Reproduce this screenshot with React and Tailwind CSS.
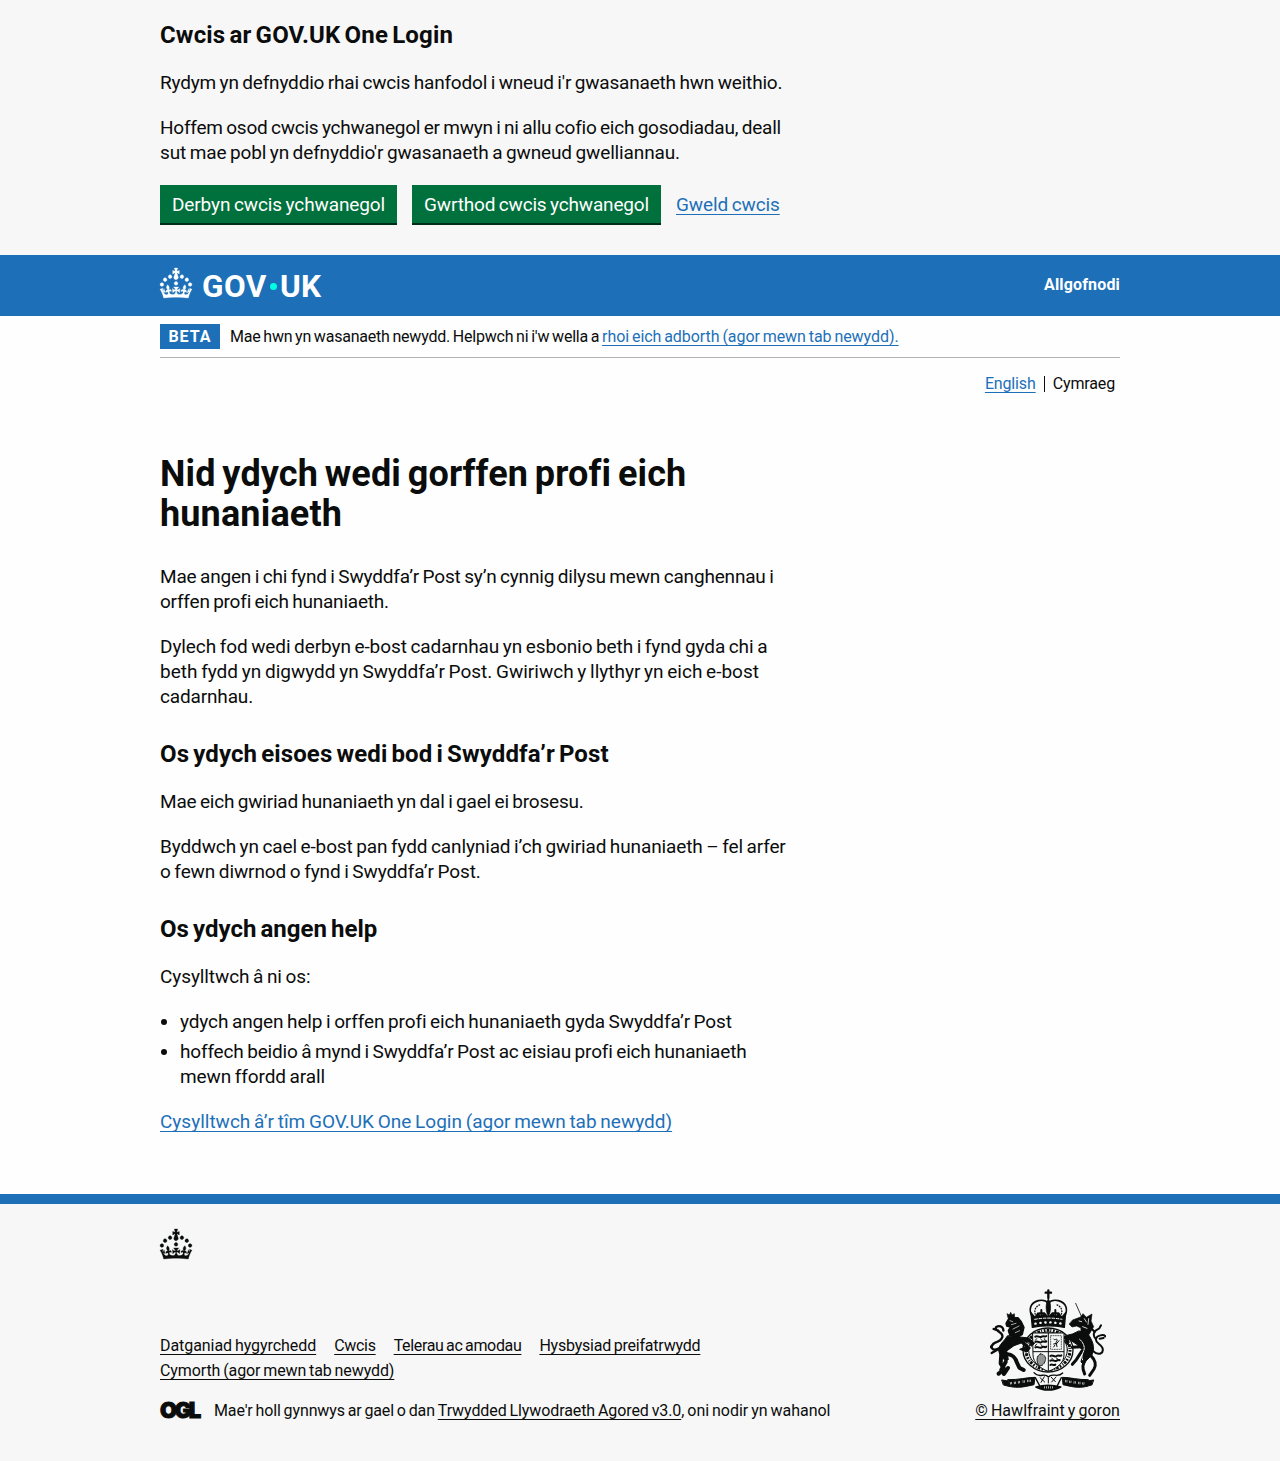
import React from "react";

const CROWN =
  "M22.6 10.4c-1 .4-2-.1-2.4-1-.4-.9.1-2 1-2.4.9-.4 2 .1 2.4 1s-.1 2-1 2.4m-5.9 6.7c-.9.4-2-.1-2.4-1-.4-.9.1-2 1-2.4.9-.4 2 .1 2.4 1s-.1 2-1 2.4m10.8-3.7c-1 .4-2-.1-2.4-1-.4-.9.1-2 1-2.4.9-.4 2 .1 2.4 1s0 2-1 2.4m3.3 4.8c-1 .4-2-.1-2.4-1-.4-.9.1-2 1-2.4.9-.4 2 .1 2.4 1s-.1 2-1 2.4M17 4.7l2.3 1.2V2.5l-2.3.7-.2-.2.9-3h-3.4l.9 3-.2.2c-.1.1-2.3-.7-2.3-.7v3.4L15 4.7c.1.1.1.2.2.2l-1.3 4c-.1.2-.1.4-.1.6 0 1.1.8 2 1.9 2.2h.7c1-.2 1.9-1.1 1.9-2.1 0-.2 0-.4-.1-.6l-1.3-4c-.1-.2 0-.2.1-.3m-7.6 5.7c.9.4 2-.1 2.4-1 .4-.9-.1-2-1-2.4-.9-.4-2 .1-2.4 1s0 2 1 2.4m-5 3c.9.4 2-.1 2.4-1 .4-.9-.1-2-1-2.4-.9-.4-2 .1-2.4 1s.1 2 1 2.4m-3.2 4.8c.9.4 2-.1 2.4-1 .4-.9-.1-2-1-2.4-.9-.4-2 .1-2.4 1s0 2 1 2.4m14.8 11c4.4 0 8.6.3 12.3.8 1.1-4.5 2.4-7 3.7-8.8l-2.5-.9c.2 1.3.3 1.9 0 2.7-.4-.4-.8-1.1-1.1-2.3l-1.2 4c.7-.5 1.3-.8 2-.9-1.1 2.5-2.6 3.1-3.5 3-1.1-.2-1.7-1.2-1.5-2.1.3-1.2 1.5-1.5 2.1-.1 1.1-2.3-.8-3-2-2.3 1.9-1.9 2.1-3.5.6-5.6-2.1 1.6-2.1 3.2-1.2 5.5-1.2-1.4-3.2-.6-2.5 1.6.9-1.4 2.1-.5 1.9.8-.2 1.1-1.7 2.1-3.5 1.9-2.7-.2-2.9-2.1-2.9-3.6.7-.1 1.9.5 2.9 1.9l.4-4.3c-1.1 1.1-2.1 1.4-3.2 1.4.4-1.2 2.1-3 2.1-3h-5.4s1.7 1.9 2.1 3c-1.1 0-2.1-.2-3.2-1.4l.4 4.3c1-1.4 2.2-2 2.9-1.9-.1 1.5-.2 3.4-2.9 3.6-1.9.2-3.4-.8-3.5-1.9-.2-1.3 1-2.2 1.9-.8.7-2.3-1.2-3-2.5-1.6.9-2.2.9-3.9-1.2-5.5-1.5 2-1.3 3.7.6 5.6-1.2-.7-3.1 0-2 2.3.6-1.4 1.8-1.1 2.1.1.2.9-.3 1.9-1.5 2.1-.9.2-2.4-.5-3.5-3 .6 0 1.2.3 2 .9l-1.2-4c-.3 1.1-.7 1.9-1.1 2.3-.3-.8-.2-1.4 0-2.7l-2.9.9C1.3 23 2.6 25.5 3.7 30c3.7-.5 7.9-.8 12.3-.8";

function Crown({ className = "" }) {
  return (
    <svg viewBox="0 0 32 30" className={`h-[30px] w-8 shrink-0 ${className}`} fill="currentColor" stroke="currentColor" strokeWidth="0.3" overflow="visible" aria-hidden="true">
      <path fillRule="evenodd" d={CROWN} />
    </svg>
  );
}

function Crest() {
  return (
    <svg viewBox="90 25 348 306" className="h-[102px] w-[116px]" fill="none" stroke="#0b0c0c" strokeLinecap="round" strokeLinejoin="round" aria-hidden="true">
      {/* royal crown */}
      <path d="M265 29v23M257 36h16" strokeWidth="7" />
      <path d="M219 112C203 88 211 66 235 60c14-3 24 0 30 8 6-8 17-11 30-8 24 6 32 28 16 52" strokeWidth="5" />
      <path d="M229 108c-10-18-2-33 13-36M301 108c10-18 2-33-13-36" strokeWidth="4" strokeDasharray="2 6" />
      <path d="M265 54c-10 16-8 38 0 54 8-16 10-38 0-54z" fill="#0b0c0c" strokeWidth="2" />
      <path d="M244 88v22M286 88v22M238 98h12M280 98h12" strokeWidth="6" />
      <path d="M213 96l12 14 9-13 9 13 10-13 12 13 12-13 10 13 9-13 9 13 12-14-4 44c-32-6-64-6-96 0z" fill="#0b0c0c" strokeWidth="4" />
      <path d="M226 129c26-5 52-5 78 0" stroke="#f7f7f7" strokeWidth="7" strokeDasharray="1 14" />
      <path d="M224 116c28-5 56-5 82 0" stroke="#f7f7f7" strokeWidth="3" strokeDasharray="8 5" />
      {/* garter and quartered shield */}
      <ellipse cx="264" cy="208" rx="75" ry="66" strokeWidth="4" />
      <ellipse cx="264" cy="208" rx="66" ry="59" strokeWidth="9" strokeLinecap="butt" strokeDasharray="5 4 8 3 3 5" />
      <ellipse cx="264" cy="208" rx="58" ry="54" strokeWidth="3" />
      <path d="M219 157h93v66c0 25-24 41-47 49-22-8-46-24-46-49z" fill="#f7f7f7" strokeWidth="3" />
      <path d="M265 158v112M220 213h91" strokeWidth="3" />
      <path d="M226 168c8-5 12 5 19 0s10 3 14-2M226 184c8-5 12 5 19 0s10 3 14-2M226 200c8-5 12 5 19 0s10 3 14-2M271 226c8-5 12 5 19 0s10 3 14-2M271 240c8-5 12 5 19 0s6 1 9-2M271 253c6-4 9 3 15-1" strokeWidth="6" />
      <path d="M230 174l-4 5m16-4l5 5m6-6l3 6M230 190l-4 5m16-4l5 5M275 232l4 4m10-4l5 4" strokeWidth="3" />
      <path d="M272 165h32v41h-32z" strokeWidth="2" strokeDasharray="3 4" />
      <path d="M281 175c4 7 7-4 11 3-2 5-6 6-2 11l7-9M281 190l8-2 2 10m-10 1l4-6" strokeWidth="3" />
      <path d="M241 220c-12 4-14 25-2 36 12-2 18-13 18-24-3-8-9-13-16-12zM234 227v24M240 223v32M246 223v31M252 227v20" strokeWidth="2.5" />
      {/* lion */}
      <path d="M144 111l-3-12 7 4 4-8 4 8 7-4 1 13z" fill="#0b0c0c" strokeWidth="2" />
      <path d="M147 112l27-1 10 12 8 17-5 21-16 10-21-6-5-15 6-11-11-3-2-8z" fill="#0b0c0c" strokeWidth="4" />
      <path d="M150 120l8 3m-4 9l14-4m-9 17l18-9m-11 20l13-6" stroke="#f7f7f7" strokeWidth="2" />
      <path d="M142 166c-9 15-19 21-25 34-5 16 8 28 20 42l8-5-5-26 22-16 22-8 12 12-17 7 22 8 10-12-21-22 19 5 4 12 11-9-18-16-35-4z" fill="#0b0c0c" strokeWidth="3" />
      <path d="M141 221c14-1 25 10 29 23l8 17 13 7M124 218l-2 30 11 18-17 13M137 244l-13 23m20-5l-12 18" strokeWidth="12" />
      <path d="M119 202c-25 15-32-8-13-16 24-8 27-23 12-32-14-8-13-15-5-17 10-2 18 4 17 13M101 145l14 5M97 193l-5 6m3 18l17-10" strokeWidth="7" />
      {/* unicorn */}
      <path d="M366 111L347 68" strokeWidth="2.5" />
      <path d="M338 118l24-9 7-10 10 11 17-10-3 21 8 17-14 24-25 3 1-23-13-6-14 3-8-8z" fill="#0b0c0c" strokeWidth="2" />
      <path d="M357 121l8 2m8-9l6 10m7-10l-2 17m-16 7l13 5" stroke="#f7f7f7" strokeWidth="2.5" />
      <path d="M358 151l28 12c12 17 19 37 11 57-6 12-20 16-25 33l-9-9c2-15 10-24 5-35l-18-18-24-16-1 18-10-7 2-21 20-5z" fill="#0b0c0c" strokeWidth="3" />
      <path d="M363 198l-26 2m28 12l-16 25-12 14m45-35c-5 28-22 34-8 64M392 224c14 14 18 27 10 41l-13 19" strokeWidth="9" />
      <path d="M359 176c10 8 16 22 13 32s-10 17-4 30" stroke="#f7f7f7" strokeWidth="3" strokeDasharray="7 3" />
      <path d="M399 211c17 16 34 7 28-10-5-12-22-13-19-27 2-10 23-14 28-7M408 176c-14-16-4-27 10-33l5-9M404 155l-6-8m33 25l-12 2" strokeWidth="6" />
      {/* compartment and motto ribbon */}
      <path d="M126 298l18 3 2 16-15-4zM400 298l-18 3-2 16 15-4z" fill="#0b0c0c" strokeWidth="3" />
      <path d="M144 297c31 1 58-7 81-7l-3 22c-23 5-47 12-75 5zM384 297c-29 1-54-7-77-7l2 22c22 5 47 12 72 5z" fill="#0b0c0c" strokeWidth="3" />
      <path d="M150 308l7-1m5 0l7-1m5-1l8-1m6-1l7-1m7-1l10-1M316 301l7 1m5 1l8 1m5 1l8 1m6 1l7 0m5 1l8 1" stroke="#f7f7f7" strokeWidth="7" strokeLinecap="butt" strokeDasharray="2 2" />
      <path d="M222 276c17 20 32-3 43 13 12-15 27 5 43-12M226 291l14 26c17 5 35 5 51 0l13-26" strokeWidth="4" />
      <path d="M228 319c24-7 49-7 74 0-21 12-53 12-74 0z" fill="#0b0c0c" strokeWidth="5" />
      <path d="M252 320h28" stroke="#f7f7f7" strokeWidth="7" strokeLinecap="butt" strokeDasharray="2 4" />
      <path d="M240 291l14 13m-1-16l-10 17m45-16l-13 15m-1-14l12 13M265 292v15" strokeWidth="3" />
    </svg>
  );
}

const wrap = "mx-auto w-[960px]";

function Link({ children, className = "" }) {
  return (
    <a href="#" className={`underline decoration-1 underline-offset-[3px] [text-decoration-skip-ink:none] ${className}`}>
      {children}
    </a>
  );
}

function Button({ children, className }) {
  return (
    <button className={`h-[38px] bg-[#00703c] pt-px text-center leading-[38px] [word-spacing:-1px] whitespace-nowrap text-white shadow-[0_2px_0_#002d18] ${className}`}>
      {children}
    </button>
  );
}

function Line({ children, className }) {
  return <span className={`block whitespace-nowrap ${className}`}>{children}</span>;
}

function H2({ children, className }) {
  return <h2 className={`mb-5 text-[24px] leading-[30px] font-bold [word-spacing:-2px] ${className}`}>{children}</h2>;
}

function CookieBanner() {
  return (
    <section className="h-[255px] bg-[#f7f7f7] pt-5">
      <div className={wrap}>
        <H2 className="tracking-[0.17px]">Cwcis ar GOV.UK One Login</H2>
        <p className="mb-5">
          <Line className="tracking-[-0.18px]">Rydym yn defnyddio rhai cwcis hanfodol i wneud i'r gwasanaeth hwn weithio.</Line>
        </p>
        <p className="mb-5">
          <Line className="tracking-[-0.23px]">Hoffem osod cwcis ychwanegol er mwyn i ni allu cofio eich gosodiadau, deall</Line>
          <Line className="tracking-[-0.13px]">sut mae pobl yn defnyddio'r gwasanaeth a gwneud gwelliannau.</Line>
        </p>
        <div className="flex gap-[15px]">
          <Button className="w-[237px] tracking-[-0.11px]">Derbyn cwcis ychwanegol</Button>
          <Button className="w-[249px] tracking-[-0.17px]">Gwrthod cwcis ychwanegol</Button>
          <Link className="leading-[39px] tracking-[-0.11px] text-[#1d70b8]">Gweld cwcis</Link>
        </div>
      </div>
    </section>
  );
}

function Header() {
  return (
    <header className="h-[61px] bg-[#1d70b8] text-white">
      <div className={`${wrap} flex items-start justify-between pt-[13px]`}>
        <a href="#" className="flex items-start">
          <Crown />
          <span className="ml-[10px] flex h-[36px] items-center text-[31.5px] leading-[36px] font-bold">
            <span className="mt-[2px] tracking-[0.5px]">GOV</span>
            <span className="mr-[3px] ml-[3px] h-[7px] w-[7px] rounded-full bg-[#00ffe0]" />
            <span className="mt-[2px] tracking-[0.3px]">UK</span>
          </span>
        </a>
        <a href="#" className="mt-[7px] text-[16px] leading-5 font-bold tracking-[0.16px]">Allgofnodi</a>
      </div>
    </header>
  );
}

function PhaseBanner() {
  return (
    <div className={wrap}>
      <div className="flex h-[42px] items-start border-b border-[#b1b4b6] pt-2 text-[16px] leading-[25px]">
        <strong className="mr-2.5 h-[25px] w-[60px] bg-[#1d70b8] text-center tracking-[1px] text-white">BETA</strong>
        <span className="tracking-[-0.21px] whitespace-nowrap">
          Mae hwn yn wasanaeth newydd. Helpwch ni i'w wella a{" "}
          <Link className="tracking-[-0.06px] text-[#1d70b8]">rhoi eich adborth (agor mewn tab newydd).</Link>
        </span>
      </div>
      <nav className="flex items-center justify-end pt-4 pr-[5px] text-[16px] leading-5 tracking-[-0.14px]">
        <Link className="text-[#1d70b8]">English</Link>
        <span className="ml-2 h-4 w-px bg-[#0b0c0c]" />
        <span className="ml-2">Cymraeg</span>
      </nav>
    </div>
  );
}

function Main() {
  return (
    <main className={`${wrap} h-[800px] pt-[60px]`}>
      <h1 className="mb-[30px] text-[36px] leading-[40px] font-bold tracking-[0.15px] [word-spacing:-2.4px]">
        Nid ydych wedi gorffen profi eich
        <br />
        hunaniaeth
      </h1>
      <p className="mb-5">
        <Line className="tracking-[-0.18px]">Mae angen i chi fynd i Swyddfa’r Post sy’n cynnig dilysu mewn canghennau i</Line>
        <Line className="tracking-[-0.22px]">orffen profi eich hunaniaeth.</Line>
      </p>
      <p className="mb-[30px]">
        <Line className="tracking-[-0.09px]">Dylech fod wedi derbyn e-bost cadarnhau yn esbonio beth i fynd gyda chi a</Line>
        <Line>beth fydd yn digwydd yn Swyddfa’r Post. Gwiriwch y llythyr yn eich e-bost</Line>
        <Line className="tracking-[-0.15px]">cadarnhau.</Line>
      </p>
      <H2 className="tracking-[0.12px]">Os ydych eisoes wedi bod i Swyddfa’r Post</H2>
      <p className="mb-5">
        <Line className="tracking-[-0.2px]">Mae eich gwiriad hunaniaeth yn dal i gael ei brosesu.</Line>
      </p>
      <p className="mb-[30px]">
        <Line className="tracking-[-0.12px]">Byddwch yn cael e-bost pan fydd canlyniad i’ch gwiriad hunaniaeth – fel arfer</Line>
        <Line className="tracking-[-0.1px]">o fewn diwrnod o fynd i Swyddfa’r Post.</Line>
      </p>
      <H2 className="tracking-[0.03px]">Os ydych angen help</H2>
      <p className="mb-5 tracking-[-0.09px]">Cysylltwch â ni os:</p>
      <ul className="mb-5 list-disc space-y-[5px] pl-5">
        <li className="tracking-[-0.11px]">ydych angen help i orffen profi eich hunaniaeth gyda Swyddfa’r Post</li>
        <li className="tracking-[-0.17px]">
          hoffech beidio â mynd i Swyddfa’r Post ac eisiau profi eich hunaniaeth
          <br />
          <span className="tracking-[-0.1px]">mewn ffordd arall</span>
        </li>
      </ul>
      <Link className="text-[#1d70b8]">Cysylltwch â’r tîm GOV.UK One Login (agor mewn tab newydd)</Link>
    </main>
  );
}

function Footer() {
  return (
    <footer className="h-[267px] border-t-[10px] border-[#1d70b8] bg-[#f7f7f7] pt-[25px] text-[16px]">
      <div className={wrap}>
        <Crown />
        <div className="mt-[30px] flex items-end justify-between leading-[25px]">
          <div>
            <ul className="flex gap-[18px]">
              <li><Link className="tracking-[-0.06px]">Datganiad hygyrchedd</Link></li>
              <li><Link className="tracking-[-0.3px]">Cwcis</Link></li>
              <li><Link className="tracking-[-0.35px]">Telerau ac amodau</Link></li>
              <li><Link className="tracking-[-0.22px]">Hysbysiad preifatrwydd</Link></li>
            </ul>
            <Link className="tracking-[-0.1px]">Cymorth (agor mewn tab newydd)</Link>
            <div className="mt-[15px] flex items-center">
              <span className="w-[54px] font-['Inter',sans-serif] text-[22px] leading-[25px] font-black tracking-[-2.4px] [-webkit-text-stroke:1px_#0b0c0c]">OGL</span>
              <span className="tracking-[-0.12px] whitespace-nowrap">
                Mae'r holl gynnwys ar gael o dan <Link className="tracking-[-0.09px]">Trwydded Llywodraeth Agored v3.0</Link>
                <span className="tracking-[-0.02px]">, oni nodir yn wahanol</span>
              </span>
            </div>
          </div>
          <div className="flex flex-col items-end">
            <div className="mr-[14px] h-[102px]"><Crest /></div>
            <Link className="mt-[7px] tracking-[0.05px] whitespace-nowrap">© Hawlfraint y goron</Link>
          </div>
        </div>
      </div>
    </footer>
  );
}

export default function App() {
  return (
    <div className="w-[1280px] bg-[#fefefe] font-['Roboto',sans-serif] text-[19px] leading-[25px] text-[#0b0c0c] [word-spacing:-1px]">
      <CookieBanner />
      <Header />
      <PhaseBanner />
      <Main />
      <Footer />
    </div>
  );
}
